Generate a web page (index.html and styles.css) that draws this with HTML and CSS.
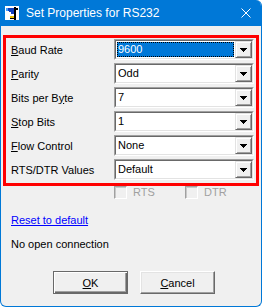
FILE: index.html
```html
<!DOCTYPE html>
<html lang="en">

<head>
    <meta charset="UTF-8" />
    <title>Set Properties for RS232</title>
    <link rel="stylesheet" href="styles.css">
</head>

<body>
    <div class="window">
        <div class="titlebar">
            <svg class="app-icon" width="16" height="16" viewBox="0 0 16 16">
                <rect x="1" y="1" width="14" height="14" fill="#fff" />
                <polygon points="2,3 10,3 10,9 7,9 7,7 5,7 5,6 2,6" fill="#1040c0" />
                <rect x="2" y="3" width="2" height="3" fill="#40a0ff" />
                <rect x="10" y="2" width="2" height="13" fill="#000" />
                <rect x="12" y="3" width="2" height="2" fill="#000" />
                <rect x="6" y="11" width="4" height="2" fill="#e8c000" />
                <rect x="6" y="13" width="4" height="1" fill="#000" />
            </svg>
            <span class="title">Set Properties for RS232</span>
            <svg class="close" width="10" height="10" viewBox="0 0 10 10">
                <path d="M0.5 0.5 L9.5 9.5 M9.5 0.5 L0.5 9.5" stroke="#fff" stroke-width="1" fill="none" />
            </svg>
        </div>

        <div class="client">
            <!-- 設定項目（赤枠） -->
            <div class="settings">
                <div class="row">
                    <label><u>B</u>aud Rate</label>
                    <div class="combo">
                        <div class="combo-inner">
                            <span class="value selected">9600</span>
                            <span class="drop"><svg width="7" height="4" viewBox="0 0 7 4"><polygon points="0,0 7,0 3.5,4" fill="#000" /></svg></span>
                        </div>
                    </div>
                </div>
                <div class="row">
                    <label><u>P</u>arity</label>
                    <div class="combo">
                        <div class="combo-inner">
                            <span class="value">Odd</span>
                            <span class="drop"><svg width="7" height="4" viewBox="0 0 7 4"><polygon points="0,0 7,0 3.5,4" fill="#000" /></svg></span>
                        </div>
                    </div>
                </div>
                <div class="row">
                    <label>Bits per B<u>y</u>te</label>
                    <div class="combo">
                        <div class="combo-inner">
                            <span class="value">7</span>
                            <span class="drop"><svg width="7" height="4" viewBox="0 0 7 4"><polygon points="0,0 7,0 3.5,4" fill="#000" /></svg></span>
                        </div>
                    </div>
                </div>
                <div class="row">
                    <label><u>S</u>top Bits</label>
                    <div class="combo">
                        <div class="combo-inner">
                            <span class="value">1</span>
                            <span class="drop"><svg width="7" height="4" viewBox="0 0 7 4"><polygon points="0,0 7,0 3.5,4" fill="#000" /></svg></span>
                        </div>
                    </div>
                </div>
                <div class="row">
                    <label><u>F</u>low Control</label>
                    <div class="combo">
                        <div class="combo-inner">
                            <span class="value">None</span>
                            <span class="drop"><svg width="7" height="4" viewBox="0 0 7 4"><polygon points="0,0 7,0 3.5,4" fill="#000" /></svg></span>
                        </div>
                    </div>
                </div>
                <div class="row">
                    <label>RTS/DTR Values</label>
                    <div class="combo">
                        <div class="combo-inner">
                            <span class="value">Default</span>
                            <span class="drop"><svg width="7" height="4" viewBox="0 0 7 4"><polygon points="0,0 7,0 3.5,4" fill="#000" /></svg></span>
                        </div>
                    </div>
                </div>
            </div>

            <div class="checks">
                <span class="check"><span class="box"></span>RTS</span>
                <span class="check"><span class="box"></span>DTR</span>
            </div>

            <a class="reset" href="#">Reset to default</a>
            <div class="status">No open connection</div>

            <div class="buttons">
                <button class="btn default"><u>O</u>K</button>
                <button class="btn"><u>C</u>ancel</button>
            </div>
        </div>
    </div>
</body>

</html>
```

FILE: styles.css
```css
:root {
    --face: #f0f0f0;
    --title: #0078d7;
    --font: 'Liberation Sans', Arial, sans-serif;
}

html,
body {
    margin: 0;
    padding: 0;
    background-color: #fff;
}

body {
    font-family: var(--font);
    font-size: 11px;
    color: #000;
}

.window {
    width: 262px;
    height: 307px;
    box-sizing: border-box;
    border: 1px solid var(--title);
    border-top: 0;
    border-radius: 0 6px 6px 6px;
    background-color: var(--face);
    overflow: hidden;
}

/* タイトルバー */
.titlebar {
    height: 26px;
    display: flex;
    align-items: center;
    background-color: var(--title);
    color: #fff;
    font-size: 12px;
    padding: 0 10px 0 3px;
}

.app-icon {
    flex: none;
    margin-right: 6px;
}

.title {
    white-space: nowrap;
}

.close {
    margin-left: auto;
    flex: none;
}

/* 赤枠の設定欄 */
.settings {
    width: 256px;
    box-sizing: border-box;
    margin: 9px 0 0 2px;
    border: 3px solid #f00;
    padding: 1px 2px 3px 5px;
    display: grid;
    gap: 3px;
}

.row {
    display: grid;
    grid-template-columns: 103px 140px;
    height: 21px;
    align-items: center;
}

.row label {
    white-space: nowrap;
}

.combo {
    height: 21px;
    box-sizing: border-box;
    border: 1px solid;
    border-color: #a0a0a0 #fff #fff #a0a0a0;
}

.combo-inner {
    height: 19px;
    box-sizing: border-box;
    border: 1px solid;
    border-color: #696969 #e3e3e3 #e3e3e3 #696969;
    background-color: #fff;
    display: flex;
}

.value {
    flex: 1;
    margin: 1px;
    padding-left: 1px;
    line-height: 15px;
    white-space: nowrap;
}

.value.selected {
    background-color: var(--title);
    color: #fff;
    outline: 1px dotted #000;
    outline-offset: -1px;
}

.drop {
    width: 17px;
    height: 17px;
    box-sizing: border-box;
    border: 1px solid;
    border-color: #e3e3e3 #696969 #696969 #e3e3e3;
    box-shadow: inset 1px 1px #fff, inset -1px -1px #a0a0a0;
    background-color: var(--face);
    display: flex;
    align-items: center;
    justify-content: center;
}

.drop svg {
    display: block;
    shape-rendering: crispEdges;
}

/* 無効なチェックボックス */
.checks {
    display: flex;
    height: 13px;
    margin-left: 113px;
}

.check {
    width: 71px;
    display: flex;
    align-items: center;
    gap: 6px;
    color: #a0a0a0;
    line-height: 13px;
}

.box {
    width: 13px;
    height: 13px;
    box-sizing: border-box;
    border: 1px solid;
    border-color: #a0a0a0 #fff #fff #a0a0a0;
    box-shadow: inset 1px 1px #c8c8c8;
    background-color: var(--face);
}

.reset {
    display: block;
    width: fit-content;
    margin: 15px 0 0 10px;
    line-height: 13px;
    color: #0000ff;
    text-decoration: underline;
}

.status {
    margin: 11px 0 0 10px;
    line-height: 13px;
}

.buttons {
    display: flex;
    gap: 12px;
    margin: 20px 0 0 52px;
}

.btn {
    width: 75px;
    height: 23px;
    padding: 0;
    font-family: var(--font);
    font-size: 11px;
    color: #000;
    background-color: var(--face);
    border: 1px solid;
    border-color: #fff #696969 #696969 #fff;
    box-shadow: inset -1px -1px #a0a0a0, inset 1px 1px #e3e3e3;
}

.btn.default {
    border-color: #696969;
    box-shadow: inset 1px 1px #fff, inset -1px -1px #696969, inset -2px -2px #a0a0a0;
}
```
